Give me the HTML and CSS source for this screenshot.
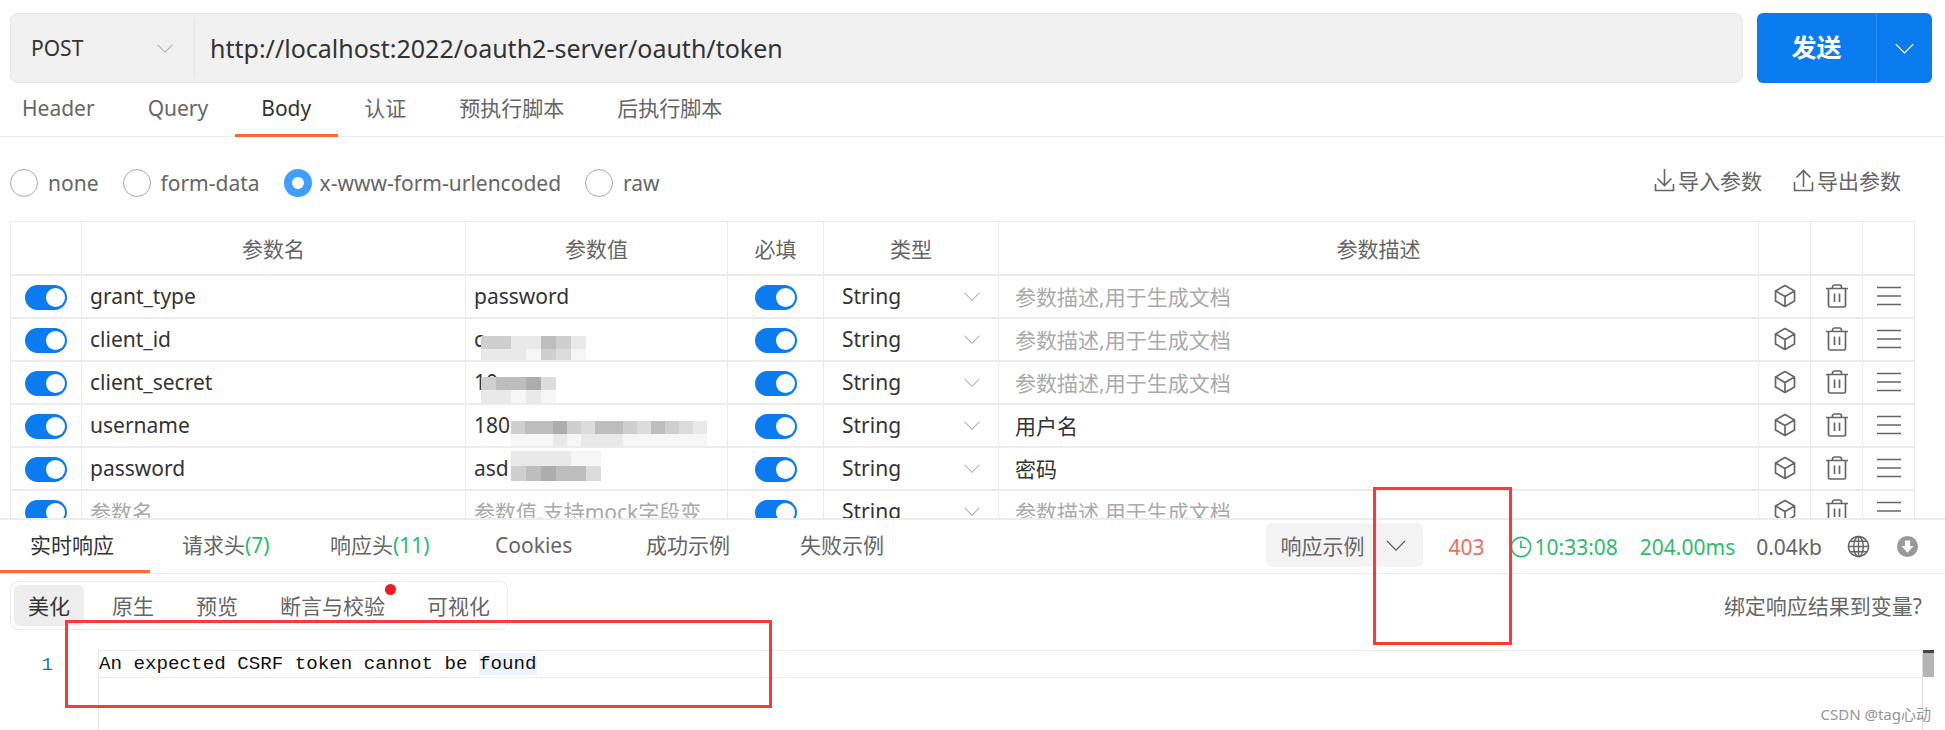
FILE: index.html
```html
<!DOCTYPE html>
<html>
<head>
  <meta charset="UTF-8">
  <title>POST oauth/token</title>
  <link rel="stylesheet" href="styles.css">
</head>
<body>
  <!-- Icon sprites -->
  <svg class="sprites" width="0" height="0">
    <symbol id="i-chev" viewBox="0 0 24 14"><polyline points="2,2 12,12 22,2" fill="none" stroke="currentColor" stroke-width="1.4"/></symbol>
    <symbol id="i-cube" viewBox="0 0 22 24"><path d="M11 1.5 20.5 7v10L11 22.5 1.500 17V7zM1.500 7 11 12.500 20.500 7M11 12.500V22.500" fill="none" stroke="currentColor" stroke-width="1.700" stroke-linejoin="round"/></symbol>
    <symbol id="i-trash" viewBox="0 0 24 24"><path d="M1 4.500H23M3.500 4.500V21.500a1.500 1.500 0 0 0 1.500 1.500H19a1.500 1.500 0 0 0 1.500-1.500V4.500M7.500 4.500V3a2 2 0 0 1 2-2h5a2 2 0 0 1 2 2v1.500M9.500 9.500V18M14.500 9.500V18" fill="none" stroke="currentColor" stroke-width="1.700"/></symbol>
    <symbol id="i-lines" viewBox="0 0 24 20"><path d="M0 1.500H24M0 10H24M0 18.500H24" fill="none" stroke="currentColor" stroke-width="1.700"/></symbol>
  </svg>

  <!-- Request section -->
  <section class="request">
    <div class="url-row">
      <div class="url-bar">
        <div class="method"><span>POST</span><svg class="chev"><use href="#i-chev"/></svg></div>
        <div class="url">http://localhost:2022/oauth2-server/oauth/token</div>
      </div>
      <div class="send">
        <div class="send-label">发送</div>
        <div class="send-more"><svg><use href="#i-chev"/></svg></div>
      </div>
    </div>

    <div class="req-tabs">
      <div class="req-tab">Header</div>
      <div class="req-tab">Query</div>
      <div class="req-tab active">Body</div>
      <div class="req-tab">认证</div>
      <div class="req-tab">预执行脚本</div>
      <div class="req-tab">后执行脚本</div>
    </div>

    <div class="body-opts">
      <label class="radio"><i></i>none</label>
      <label class="radio"><i></i>form-data</label>
      <label class="radio on"><i></i>x-www-form-urlencoded</label>
      <label class="radio"><i></i>raw</label>
      <div class="param-actions">
        <span class="param-action">
          <svg viewBox="0 0 20 24"><path d="M10 1V17M3 10.500 10 17.500 17 10.500M1 16V22.500H19V16" fill="none" stroke="currentColor" stroke-width="1.600"/></svg>导入参数
        </span>
        <span class="param-action">
          <svg viewBox="0 0 20 24"><path d="M10 19V3M3 9.500 10 2.500 17 9.500M1 14V22.500H19V14" fill="none" stroke="currentColor" stroke-width="1.600"/></svg>导出参数
        </span>
      </div>
    </div>

    <table class="params">
      <colgroup>
        <col class="c-on"><col class="c-name"><col class="c-val"><col class="c-req"><col class="c-type"><col class="c-desc"><col class="c-ico"><col class="c-ico"><col class="c-ico">
      </colgroup>
      <thead>
        <tr><th></th><th>参数名</th><th>参数值</th><th>必填</th><th>类型</th><th>参数描述</th><th></th><th></th><th></th></tr>
      </thead>
      <tbody>
        <tr>
          <td class="tc"><span class="toggle"></span></td><td>grant_type</td><td>password</td>
          <td class="tc"><span class="toggle"></span></td>
          <td><div class="type">String<svg class="chev"><use href="#i-chev"/></svg></div></td>
          <td class="desc ph">参数描述,用于生成文档</td>
          <td class="ico"><svg class="cube"><use href="#i-cube"/></svg></td><td class="ico"><svg class="trash"><use href="#i-trash"/></svg></td><td class="ico"><svg class="lines"><use href="#i-lines"/></svg></td>
        </tr>
        <tr>
          <td class="tc"><span class="toggle"></span></td><td>client_id</td>
          <td class="masked">c
            <div class="mosaic m-id">
              <i class="s3"></i><i class="s3"></i><i class="s5"></i><i class="s5"></i><i class="s2"></i><i class="s3"></i><i class="s5"></i>
              <i class="s5"></i><i class="s5"></i><i class="s5"></i><i class="s6"></i><i class="s3"></i><i class="s4"></i><i class="s6"></i>
            </div>
          </td>
          <td class="tc"><span class="toggle"></span></td>
          <td><div class="type">String<svg class="chev"><use href="#i-chev"/></svg></div></td>
          <td class="desc ph">参数描述,用于生成文档</td>
          <td class="ico"><svg class="cube"><use href="#i-cube"/></svg></td><td class="ico"><svg class="trash"><use href="#i-trash"/></svg></td><td class="ico"><svg class="lines"><use href="#i-lines"/></svg></td>
        </tr>
        <tr>
          <td class="tc"><span class="toggle"></span></td><td>client_secret</td>
          <td class="masked">10
            <div class="mosaic m-secret">
              <i class="s3"></i><i class="s2"></i><i class="s2"></i><i class="s1"></i><i class="s4"></i>
              <i class="s5"></i><i class="s5"></i><i class="s6"></i><i class="s5"></i><i class="s6"></i>
            </div>
          </td>
          <td class="tc"><span class="toggle"></span></td>
          <td><div class="type">String<svg class="chev"><use href="#i-chev"/></svg></div></td>
          <td class="desc ph">参数描述,用于生成文档</td>
          <td class="ico"><svg class="cube"><use href="#i-cube"/></svg></td><td class="ico"><svg class="trash"><use href="#i-trash"/></svg></td><td class="ico"><svg class="lines"><use href="#i-lines"/></svg></td>
        </tr>
        <tr>
          <td class="tc"><span class="toggle"></span></td><td>username</td>
          <td class="masked">180
            <div class="mosaic m-user">
              <i class="s3"></i><i class="s2"></i><i class="s2"></i><i class="s1"></i><i class="s3"></i><i class="s4"></i><i class="s2"></i><i class="s2"></i><i class="s3"></i><i class="s4"></i><i class="s2"></i><i class="s3"></i><i class="s4"></i><i class="s5"></i>
              <i class="s6"></i><i class="s6"></i><i class="s6"></i><i class="s5"></i><i class="s6"></i><i class="s5"></i><i class="s5"></i><i class="s5"></i><i class="s6"></i><i class="s6"></i><i class="s6"></i><i class="s6"></i><i class="s6"></i><i class="s6"></i>
            </div>
          </td>
          <td class="tc"><span class="toggle"></span></td>
          <td><div class="type">String<svg class="chev"><use href="#i-chev"/></svg></div></td>
          <td class="desc">用户名</td>
          <td class="ico"><svg class="cube"><use href="#i-cube"/></svg></td><td class="ico"><svg class="trash"><use href="#i-trash"/></svg></td><td class="ico"><svg class="lines"><use href="#i-lines"/></svg></td>
        </tr>
        <tr>
          <td class="tc"><span class="toggle"></span></td><td>password</td>
          <td class="masked">asd
            <div class="mosaic m-pass">
              <i class="s5"></i><i class="s5"></i><i class="s5"></i><i class="s5"></i><i class="s6"></i><i class="s6"></i>
              <i class="s3"></i><i class="s2"></i><i class="s1"></i><i class="s2"></i><i class="s2"></i><i class="s4"></i>
            </div>
          </td>
          <td class="tc"><span class="toggle"></span></td>
          <td><div class="type">String<svg class="chev"><use href="#i-chev"/></svg></div></td>
          <td class="desc">密码</td>
          <td class="ico"><svg class="cube"><use href="#i-cube"/></svg></td><td class="ico"><svg class="trash"><use href="#i-trash"/></svg></td><td class="ico"><svg class="lines"><use href="#i-lines"/></svg></td>
        </tr>
        <tr>
          <td class="tc"><span class="toggle"></span></td><td class="ph">参数名</td><td class="ph">参数值,支持mock字段变</td>
          <td class="tc"><span class="toggle"></span></td>
          <td><div class="type">String<svg class="chev"><use href="#i-chev"/></svg></div></td>
          <td class="desc ph">参数描述,用于生成文档</td>
          <td class="ico"><svg class="cube"><use href="#i-cube"/></svg></td><td class="ico"><svg class="trash"><use href="#i-trash"/></svg></td><td class="ico"><svg class="lines"><use href="#i-lines"/></svg></td>
        </tr>
      </tbody>
    </table>
  </section>

  <!-- Response section -->
  <section class="response">
    <div class="resp-head">
      <div class="resp-tabs">
        <div class="resp-tab active">实时响应</div>
        <div class="resp-tab">请求头<em>(7)</em></div>
        <div class="resp-tab">响应头<em>(11)</em></div>
        <div class="resp-tab">Cookies</div>
        <div class="resp-tab">成功示例</div>
        <div class="resp-tab">失败示例</div>
      </div>
      <div class="resp-status">
        <div class="example-select">响应示例<svg><use href="#i-chev"/></svg></div>
        <span class="code">403</span>
        <span class="clock">
          <svg viewBox="0 0 24 24"><circle cx="12" cy="12" r="10.500" fill="none" stroke="currentColor" stroke-width="1.800"/><path d="M12 5.500V12.500H18" fill="none" stroke="currentColor" stroke-width="1.800"/></svg>10:33:08
        </span>
        <span class="elapsed">204.00ms</span>
        <span class="size">0.04kb</span>
        <svg class="globe" viewBox="0 0 24 24"><g fill="none" stroke="currentColor" stroke-width="1.500"><circle cx="12" cy="12" r="10.500"/><ellipse cx="12" cy="12" rx="5" ry="10.500"/><path d="M12 1.500V22.500M1.500 12H22.500M3 6.500H21M3 17.500H21"/></g></svg>
        <svg class="download" viewBox="0 0 24 24"><circle cx="12" cy="12" r="12" fill="currentColor"/><path d="M9 5H15V11.500H19L12 19 5 11.500H9z" fill="#fff"/></svg>
      </div>
    </div>

    <div class="view-row">
      <div class="view-tabs">
        <div class="view-tab active">美化</div>
        <div class="view-tab">原生</div>
        <div class="view-tab">预览</div>
        <div class="view-tab dotted">断言与校验</div>
        <div class="view-tab">可视化</div>
      </div>
      <div class="bind">绑定响应结果到变量?</div>
    </div>

    <div class="editor">
      <div class="gutter">1</div>
      <div class="code-area">
        <div class="code-line">An expected CSRF token cannot be <span class="hl">found</span></div>
      </div>
      <div class="scroll-track"><div class="scroll-thumb"></div></div>
    </div>
  </section>

  <!-- Hand-drawn annotations on the screenshot -->
  <div class="mark mark-status"></div>
  <div class="mark mark-body"></div>
  <div class="watermark">CSDN @tag心动</div>
</body>
</html>
```

FILE: styles.css
```css
/* Base styles */
* {
  margin: 0;
  padding: 0;
  box-sizing: border-box;
}

body {
  position: relative;
  width: 1945px;
  height: 730px;
  overflow: hidden;
  background: #fff;
  color: #333;
  font-family: "Noto Sans", "Noto Sans CJK SC", sans-serif;
  font-size: 21px;
}

.sprites {
  position: absolute;
}

/* Request section */
.request {
  height: 520px;
  overflow: hidden;
  border-bottom: 2px solid #ececec;
}

.url-row {
  display: flex;
  height: 70px;
  margin: 13px 13px 0 10px;
  gap: 14px;
}

.url-bar {
  flex: 1;
  display: flex;
  background: #f1f1f1;
  border: 1px solid #e8e8e8;
  border-radius: 8px;
}

.method {
  display: flex;
  align-items: center;
  justify-content: space-between;
  width: 184px;
  margin: 4px 0;
  padding: 0 20px;
  border-right: 1px solid #e6e6e6;
  font-size: 21px;
}

.chev {
  width: 18px;
  height: 11px;
  color: #aaa;
}

.url {
  display: flex;
  align-items: center;
  padding-left: 15px;
  font-size: 25px;
}

.send {
  display: flex;
  width: 175px;
  border-radius: 6px;
  background: #0b7cf0;
  color: #fff;
}

.send-label {
  width: 120px;
  border-right: 1px solid #2a8df2;
  text-align: center;
  font-size: 25px;
  font-weight: 700;
  line-height: 68px;
}

.send-more {
  flex: 1;
  display: flex;
  align-items: center;
  justify-content: center;
}

.send-more svg {
  width: 21px;
  height: 13px;
}

/* Request tabs */
.req-tabs {
  display: flex;
  height: 54px;
  padding-left: 22px;
  border-bottom: 1px solid #ececec;
  color: #666;
}

.req-tab {
  padding: 0 26.5px;
  line-height: 50px;
  margin-bottom: -1px;
}

.req-tab:first-child {
  padding-left: 0;
}

.req-tab.active {
  color: #333;
  border-bottom: 3px solid #ff6a33;
}

/* Body type radios */
.body-opts {
  display: flex;
  align-items: center;
  height: 84px;
  padding: 8px 44px 0 10px;
  color: #666;
}

.radio {
  display: flex;
  align-items: center;
  gap: 10px;
  margin-right: 24px;
}

.radio i {
  width: 28px;
  height: 28px;
  border: 1px solid #aaa;
  border-radius: 50%;
}

.radio.on {
  gap: 8px;
}

.radio.on i {
  border: 8px solid #409eff;
}

.param-actions {
  display: flex;
  gap: 31px;
  margin: -6px 0 0 auto;
}

.param-action {
  display: flex;
  align-items: center;
  gap: 3px;
}

.param-action svg {
  width: 21px;
  height: 24px;
}

/* Params table */
.params {
  width: 1905px;
  margin-left: 10px;
  border-collapse: collapse;
  table-layout: fixed;
}

.c-on { width: 71px; }
.c-name { width: 384px; }
.c-val { width: 262px; }
.c-req { width: 96px; }
.c-type { width: 175px; }
.c-desc { width: 760px; }
.c-ico { width: 52px; }

.params th,
.params td {
  border: 1px solid #ececec;
  border-width: 1px 1px 2px 1px;
  height: 43px;
  padding: 0 8px;
  white-space: nowrap;
  overflow: hidden;
}

.params th {
  height: 53px;
  font-weight: 400;
  color: #666;
}

.params td.tc,
.params td.ico {
  padding: 0;
  text-align: center;
}

.params td.desc {
  padding-left: 16px;
}

.params td.ico svg {
  display: block;
  margin: 0 auto;
  color: #666;
}

.params .ph {
  color: #aaa;
}

.toggle {
  position: relative;
  display: inline-block;
  width: 42px;
  height: 25px;
  border-radius: 13px;
  background: #0b7cf0;
  vertical-align: middle;
}

.toggle::after {
  content: "";
  position: absolute;
  top: 3px;
  right: 2px;
  width: 19px;
  height: 19px;
  border-radius: 50%;
  background: #fff;
}

.type {
  display: flex;
  align-items: center;
  justify-content: space-between;
  padding: 0 9px 0 10px;
}

.cube { width: 22px; height: 24px; }
.trash { width: 24px; height: 24px; }
.lines { width: 24px; height: 20px; }

/* Pixelated values in the screenshot */
.masked {
  position: relative;
}

.mosaic {
  position: absolute;
  display: grid;
  grid-auto-rows: 13px;
}

.mosaic i { display: block; }
.s1 { background: #adadad; }
.s2 { background: #bdbdbd; }
.s3 { background: #cfcfcf; }
.s4 { background: #dcdcdc; }
.s5 { background: #e9e9e9; }
.s6 { background: #f6f6f6; }

.m-id { top: 17px; left: 15px; grid-template-columns: repeat(7, 15px); }
.m-secret { top: 15px; left: 15px; grid-template-columns: repeat(5, 15px); }
.m-user { top: 16px; left: 45px; grid-template-columns: repeat(14, 14px); }
.m-pass { top: 3px; left: 45px; grid-template-columns: repeat(6, 15px); grid-auto-rows: 15px; }

/* Response head */
.resp-head {
  display: flex;
  justify-content: space-between;
  height: 54px;
  border-bottom: 1px solid #ececec;
}

.resp-tabs {
  display: grid;
  grid-template-columns: 150px 148px 165px 151px 154px 154px;
  color: #666;
}

.resp-tab {
  padding-left: 32px;
  line-height: 50px;
  white-space: nowrap;
}

.resp-tab:first-child {
  padding-left: 30px;
}

.resp-tab.active {
  color: #333;
  border-bottom: 3px solid #ff6a33;
  height: 53px;
}

.resp-tab em {
  font-style: normal;
  color: #1fbf6b;
}

.resp-status {
  display: flex;
  align-items: center;
  padding: 0 27px 0 0;
}

.example-select {
  display: flex;
  align-items: center;
  justify-content: space-between;
  width: 157px;
  height: 44px;
  margin-top: -3px;
  padding: 0 16px 0 14px;
  border-radius: 6px;
  background: #f3f3f3;
  color: #666;
}

.example-select svg {
  width: 22px;
  height: 13px;
  color: #555;
}

.code {
  margin-left: 25px;
  color: #f56c5c;
}

.clock {
  display: flex;
  align-items: center;
  gap: 2px;
  margin-left: 26px;
  color: #2dbe6c;
}

.clock svg {
  width: 22px;
  height: 22px;
}

.elapsed {
  margin-left: 22px;
  color: #2dbe6c;
}

.size {
  margin-left: 21px;
  color: #666;
}

.globe {
  width: 23px;
  height: 23px;
  margin-left: 25px;
  color: #666;
}

.download {
  width: 21px;
  height: 21px;
  margin-left: 27px;
  color: #999;
}

/* Response views */
.view-row {
  display: flex;
  justify-content: space-between;
  align-items: center;
  height: 76px;
  padding: 0 23px 14px 10px;
  color: #666;
}

.view-tabs {
  display: flex;
  height: 49px;
  padding: 3px;
  border: 1px solid #ececec;
  border-radius: 8px;
}

.view-tab {
  position: relative;
  padding: 0 14px;
  margin-right: 14px;
  line-height: 42px;
  border-radius: 6px;
}

.view-tab:last-child {
  margin-right: 0;
}

.view-tab.active {
  background: #eee;
  color: #333;
}

.view-tab.dotted::after {
  content: "";
  position: absolute;
  top: -1px;
  right: 3px;
  width: 11px;
  height: 11px;
  border-radius: 50%;
  background: #ee1c1c;
}

/* Code editor */
.editor {
  display: flex;
  height: 80px;
}

.gutter {
  width: 98px;
  padding-right: 45px;
  padding-top: 1px;
  text-align: right;
  font-family: "Liberation Mono", monospace;
  font-size: 19px;
  line-height: 28px;
  color: #237893;
}

.code-area {
  flex: 1;
  border-left: 1px solid #e6e6e6;
}

.code-line {
  height: 28px;
  border-top: 1px solid #ececec;
  border-bottom: 1px solid #ececec;
  font-family: "Liberation Mono", monospace;
  font-size: 19.200px;
  line-height: 26px;
  color: #111;
}

.hl {
  background: #eff5ff;
}

.scroll-track {
  width: 23px;
  border-left: 1px solid #ddd;
}

.scroll-thumb {
  width: 11px;
  height: 27px;
  border-top: 3px solid #444;
  background: #b4b4b4;
  box-shadow: 12px -1px 0 -1px #fff;
}

/* Annotations */
.mark {
  position: absolute;
  border: 3px solid #f83a3a;
}

.mark-status {
  top: 487px;
  left: 1373px;
  width: 139px;
  height: 158px;
}

.mark-body {
  top: 620px;
  left: 65px;
  width: 707px;
  height: 88px;
}

.watermark {
  position: absolute;
  top: 703px;
  right: 14px;
  font-size: 15px;
  color: #8a8a8a;
  opacity: 0.9;
}
```
